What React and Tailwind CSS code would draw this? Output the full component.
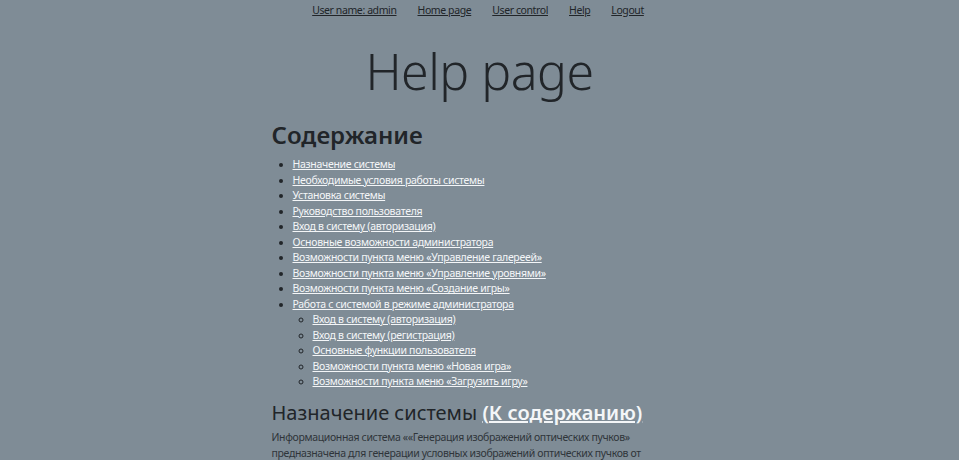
import React from 'react';

const contents = [
  'Назначение системы',
  'Необходимые условия работы системы',
  'Установка системы',
  'Руководство пользователя',
  'Вход в систему (авторизация)',
  'Основные возможности администратора',
  'Возможности пункта меню «Управление галереей»',
  'Возможности пункта меню «Управление уровнями»',
  'Возможности пункта меню «Создание игры»',
  'Работа с системой в режиме администратора',
];

const userItems = [
  'Вход в систему (авторизация)',
  'Вход в систему (регистрация)',
  'Основные функции пользователя',
  'Возможности пункта меню «Новая игра»',
  'Возможности пункта меню «Загрузить игру»',
];

const navLinks = ['User name: admin', 'Home page', 'User control', 'Help', 'Logout'];

export default function App() {
  return (
    <div className="min-h-screen bg-[#7f8c96] text-[#212529] font-['Noto_Sans','Open_Sans',sans-serif]">
      <nav className="flex justify-center gap-[21px] pt-[2px] pr-[3px] text-[10.5px] leading-[17px] tracking-[-0.4px]">
        {navLinks.map((l) => (
          <a key={l} href="#" className="underline text-[#212529]">{l}</a>
        ))}
      </nav>

      <div className="w-[416px] mx-auto">
        <h1 className="text-center font-light text-[50px] leading-[68px] mt-[18px] text-[#212529] tracking-[-0.5px]">
          Help page
        </h1>

        <h2 className="font-semibold text-[24px] leading-[32px] mt-[14px] text-[#212529]">Содержание</h2>

        <ul className="list-disc pl-[21px] mt-[6px] text-[10.5px] leading-[15.5px] tracking-[-0.3px] marker:text-[#212529]">
          {contents.map((c) => (
            <li key={c}>
              <a href="#" className="underline text-[#f4f6f8]">{c}</a>
            </li>
          ))}
          <ul className="list-[circle] pl-[20px]">
            {userItems.map((c) => (
              <li key={c}>
                <a href="#" className="underline text-[#f4f6f8]">{c}</a>
              </li>
            ))}
          </ul>
        </ul>

        <h3 className="text-[20px] leading-[28px] mt-[9px] text-[#212529]">
          Назначение системы{' '}
          <a href="#" className="underline font-semibold text-[#f4f6f8]">(К содержанию)</a>
        </h3>

        <p className="text-[10.5px] leading-[16px] mt-[2px] tracking-[-0.35px] text-[#2f353a]">
          Информационная система ««Генерация изображений оптических пучков» предназначена для генерации условных изображений оптических пучков от лазерных источников в учебных целях.
        </p>
      </div>
    </div>
  );
}
